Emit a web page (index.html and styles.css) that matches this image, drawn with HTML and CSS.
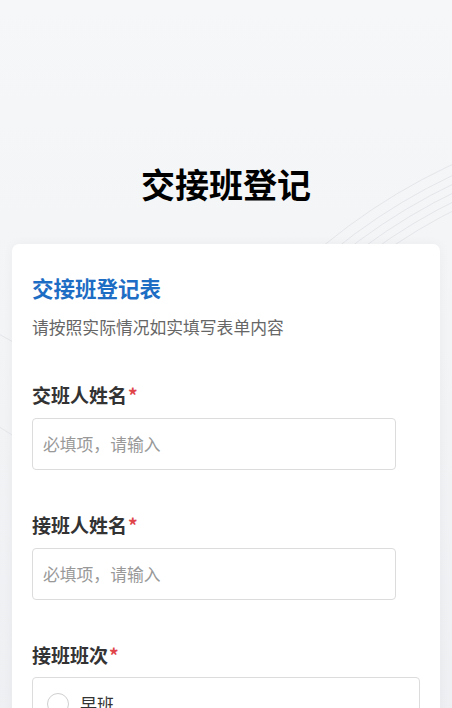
FILE: index.html
```html
<!DOCTYPE html>
<html lang="zh-CN">
<head>
    <meta charset="UTF-8">
    <meta name="viewport" content="width=device-width, initial-scale=1.0">
    <title>交接班登记</title>
    <link rel="stylesheet" href="styles.css">
</head>
<body>
    <svg class="bg-lines" width="452" height="708" viewBox="0 0 452 708">
        <g fill="none" stroke="#e4e6ea" stroke-width="1">
            <circle cx="700" cy="700" r="548"/>
            <circle cx="700" cy="700" r="556"/>
            <circle cx="700" cy="700" r="564"/>
            <circle cx="700" cy="700" r="572"/>
            <circle cx="700" cy="700" r="580"/>
            <circle cx="700" cy="700" r="590"/>
            <circle cx="-300" cy="900" r="560"/>
            <circle cx="-300" cy="900" r="640"/>
        </g>
    </svg>

    <div class="page">
        <h1 class="title">交接班登记</h1>

        <div class="card">
            <h2 class="form-title">交接班登记表</h2>
            <p class="form-desc">请按照实际情况如实填写表单内容</p>

            <div class="field">
                <label class="field-label">交班人姓名<span class="req">*</span></label>
                <input class="text-input" type="text" placeholder="必填项，请输入">
            </div>

            <div class="field">
                <label class="field-label">接班人姓名<span class="req">*</span></label>
                <input class="text-input" type="text" placeholder="必填项，请输入">
            </div>

            <div class="field">
                <label class="field-label">接班班次<span class="req">*</span></label>
                <div class="radio-group">
                    <label class="radio-item"><span class="radio"></span>早班</label>
                    <label class="radio-item"><span class="radio"></span>中班</label>
                    <label class="radio-item"><span class="radio"></span>晚班</label>
                </div>
            </div>
        </div>
    </div>
</body>
</html>
```

FILE: styles.css
```css
body {
    margin: 0;
    font-family: "Noto Sans CJK SC", "Noto Sans", sans-serif;
    background: linear-gradient(180deg, #f6f7f9 0%, #f3f4f6 40%, #eceef1 100%);
    color: #333;
    min-height: 708px;
    position: relative;
    overflow: hidden;
}
.bg-lines {
    position: absolute;
    top: 0;
    left: 0;
    z-index: 0;
}
.page {
    position: relative;
    z-index: 1;
    padding-top: 160px;
}
.title {
    margin: 0;
    text-align: center;
    font-size: 34px;
    line-height: 48px;
    font-weight: 700;
    color: #000;
}
.card {
    margin: 36px 12px 0;
    background: #fff;
    border-radius: 7px;
    padding: 28px 20px 30px;
    box-shadow: 0 0 12px rgba(0,0,0,0.04);
}
.form-title {
    margin: 0;
    font-size: 21.5px;
    line-height: 32px;
    font-weight: 700;
    color: #1d6dc4;
}
.form-desc {
    margin: 10px 0 0;
    font-size: 16.8px;
    line-height: 26px;
    color: #666;
}
.field {
    margin-top: 41px;
}
.field-label {
    display: block;
    font-size: 19px;
    line-height: 28px;
    font-weight: 700;
    color: #333;
}
.req {
    color: #e0454a;
    margin-left: 1px;
}
.text-input {
    display: block;
    box-sizing: border-box;
    margin-top: 9px;
    width: 364px;
    height: 52px;
    padding: 0 10px;
    border: 1px solid #dcdcdc;
    border-radius: 4px;
    font-family: inherit;
    font-size: 16.8px;
    color: #333;
    background: #fff;
    outline: none;
}
.text-input::placeholder {
    color: #999;
}
.radio-group {
    margin-top: 8px;
    border: 1px solid #dcdcdc;
    border-radius: 4px;
    padding: 14px 14px 6px;
}
.radio-item {
    display: flex;
    align-items: center;
    gap: 11px;
    font-size: 17px;
    line-height: 24px;
    color: #333;
    margin-bottom: 14px;
}
.radio {
    width: 20px;
    height: 20px;
    border: 1px solid #cfcfcf;
    border-radius: 50%;
    background: #fff;
}
```
